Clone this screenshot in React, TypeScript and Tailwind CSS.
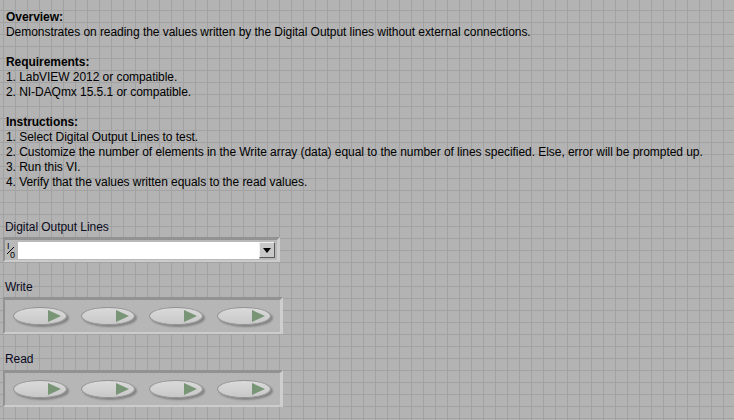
function IoIcon() {
  return (
    <svg width="12" height="18" viewBox="0 0 12 18" className="shrink-0">
      <text x="1" y="8" fontSize="9" fontFamily="Liberation Sans, sans-serif" fill="#000">I</text>
      <line x1="1" y1="13" x2="8" y2="6" stroke="#000" strokeWidth="1" />
      <text x="4" y="17" fontSize="9" fontFamily="Liberation Sans, sans-serif" fill="#000">0</text>
    </svg>
  );
}

function BoolButton() {
  return (
    <div className="relative w-[54px] h-[18px] rounded-[50%] border border-[#939393] bg-[linear-gradient(to_bottom,#dadada,#c8c8c8)] shadow-[2px_2px_2px_rgba(0,0,0,0.28)]">
      <svg width="13" height="12" viewBox="0 0 13 12" className="absolute right-[5px] top-[2px]">
        <polygon points="0,0 13,6 0,12" fill="#789676" />
      </svg>
    </div>
  );
}

function BoolArray() {
  return (
    <div className="ml-[3px] w-[280px] h-[37px] flex items-center gap-[14px] pl-[8px] bg-[#b6b6b6] border-t-[3px] border-l-[2px] border-t-[#929292] border-l-[#929292] border-r-[3px] border-b-[2px] border-r-[#cecece] border-b-[#cccccc]">
      <BoolButton />
      <BoolButton />
      <BoolButton />
      <BoolButton />
    </div>
  );
}

export default function App() {
  return (
    <div className="w-[734px] h-[420px] overflow-hidden bg-[#b3b3b3] [background-image:linear-gradient(to_right,#a2a2a2_1px,transparent_1px),linear-gradient(to_bottom,#a2a2a2_1px,transparent_1px)] [background-size:12px_12px] [background-position:3px_10px] font-['Liberation_Sans',sans-serif] text-[12px] tracking-[-0.05px] text-black">
      {/* Description */}
      <div className="pl-[6px] pt-[10px] leading-[15px]">
        <p className="font-bold">Overview:</p>
        <p>Demonstrates on reading the values written by the Digital Output lines without external connections.</p>
        <p>&nbsp;</p>
        <p className="font-bold">Requirements:</p>
        <p>1. LabVIEW 2012 or compatible.</p>
        <p>2. NI-DAQmx 15.5.1 or compatible.</p>
        <p>&nbsp;</p>
        <p className="font-bold">Instructions:</p>
        <p>1. Select Digital Output Lines to test.</p>
        <p>2. Customize the number of elements in the Write array (data) equal to the number of lines specified. Else, error will be prompted up.</p>
        <p>3. Run this VI.</p>
        <p>4. Verify that the values written equals to the read values.</p>
      </div>

      {/* Digital Output Lines */}
      <p className="mt-[30px] pl-[5px] leading-[15px] text-[#0a0a20]">Digital Output Lines</p>
      <div className="mt-[2px] ml-[3px] w-[277px] h-[25px] flex items-center bg-[#b9b9b9] border-t-[3px] border-l-[2px] border-t-[#929292] border-l-[#929292] border-r-[3px] border-b-[2px] border-r-[#cecece] border-b-[#cccccc]">
        <div className="w-[13px] flex justify-center">
          <IoIcon />
        </div>
        <div className="h-[17px] flex-1 bg-white" />
        <div className="w-[16px] h-[16px] mr-[2px] flex items-center justify-center bg-[#c8c8c8] border border-t-[#f0f0f0] border-l-[#f0f0f0] border-r-[#5a5a5a] border-b-[#5a5a5a]">
          <svg width="8" height="5" viewBox="0 0 8 5">
            <polygon points="0,0 8,0 4,5" fill="#000" />
          </svg>
        </div>
      </div>

      {/* Write */}
      <p className="mt-[18px] pl-[5px] leading-[15px] text-[#0a0a20]">Write</p>
      <div className="mt-[2px]">
        <BoolArray />
      </div>

      {/* Read */}
      <p className="mt-[18px] pl-[5px] leading-[15px] text-[#0a0a20]">Read</p>
      <div className="mt-[3px]">
        <BoolArray />
      </div>
    </div>
  );
}
